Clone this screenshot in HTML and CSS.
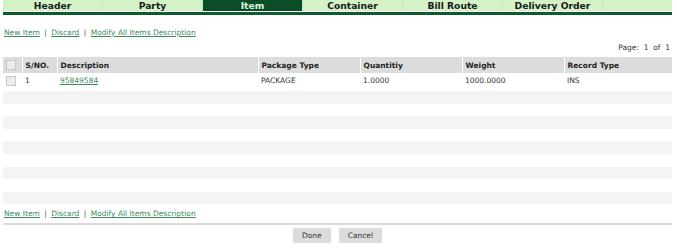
FILE: index.html
```html
<!DOCTYPE html>
<html lang="en">
<head>
  <meta charset="UTF-8" />
  <title>Item</title>
  <link rel="stylesheet" href="styles.css">
</head>
<body>
  <div class="tabs">
    <div class="tab">Header</div>
    <div class="tab">Party</div>
    <div class="tab active">Item</div>
    <div class="tab">Container</div>
    <div class="tab">Bill Route</div>
    <div class="tab">Delivery Order</div>
    <div class="tab last"></div>
  </div>

  <div class="actions top">
    <a href="#">New Item</a> <span class="sep">|</span>
    <a href="#">Discard</a> <span class="sep">|</span>
    <a href="#">Modify All Items Description</a>
  </div>

  <div class="pager">Page:&nbsp; 1&nbsp; of&nbsp; 1</div>

  <table class="grid">
    <colgroup>
      <col class="c-chk">
      <col class="c-sno">
      <col class="c-desc">
      <col class="c-pkg">
      <col class="c-qty">
      <col class="c-wt">
      <col>
    </colgroup>
    <thead>
      <tr>
        <th><span class="chk"></span></th>
        <th>S/NO.</th>
        <th>Description</th>
        <th>Package Type</th>
        <th>Quantitiy</th>
        <th>Weight</th>
        <th>Record Type</th>
      </tr>
    </thead>
    <tbody>
      <tr class="data">
        <td><span class="chk"></span></td>
        <td>1</td>
        <td><a href="#">95849584</a></td>
        <td>PACKAGE</td>
        <td>1.0000</td>
        <td>1000.0000</td>
        <td>INS</td>
      </tr>
      <tr class="empty odd"><td colspan="7"></td></tr>
      <tr class="empty"><td colspan="7"></td></tr>
      <tr class="empty odd"><td colspan="7"></td></tr>
      <tr class="empty"><td colspan="7"></td></tr>
      <tr class="empty odd"><td colspan="7"></td></tr>
      <tr class="empty"><td colspan="7"></td></tr>
      <tr class="empty odd"><td colspan="7"></td></tr>
      <tr class="empty"><td colspan="7"></td></tr>
      <tr class="empty odd"><td colspan="7"></td></tr>
    </tbody>
  </table>

  <div class="actions bottom">
    <a href="#">New Item</a> <span class="sep">|</span>
    <a href="#">Discard</a> <span class="sep">|</span>
    <a href="#">Modify All Items Description</a>
  </div>

  <div class="buttons">
    <button>Done</button>
    <button>Cancel</button>
  </div>
</body>
</html>
```

FILE: styles.css
```css
body {
  margin: 0;
  padding: 0 5px 0 3px;
  font-family: "DejaVu Sans", Verdana, sans-serif;
  font-size: 7.5px;
  color: #333;
  background: #fff;
}

.tabs {
  display: flex;
  height: 11px;
  border-bottom: 3px solid #0d5a2f;
  padding-bottom: 1px;
}
.tab {
  box-sizing: border-box;
  width: 100px;
  background: #d3f2c6;
  border-right: 1px solid #c6e8b8;
  text-align: center;
  font-weight: bold;
  font-size: 9.2px;
  line-height: 11px;
  color: #1a1a1a;
}
.tab.active {
  background: #0b4d29;
  color: #dff3d8;
}
.tab.last {
  flex: 1;
  border-right: 0;
}

.actions {
  padding-left: 1px;
  color: #555;
}
.actions.top {
  margin-top: 13px;
}
.actions a {
  color: #3b8a5c;
}
.sep {
  margin: 0 2px;
}

.pager {
  text-align: right;
  margin-top: 6px;
  padding-right: 2px;
}

.grid {
  width: 100%;
  table-layout: fixed;
  border-collapse: collapse;
  margin-top: 5px;
}
.c-chk { width: 19px; }
.c-sno { width: 35px; }
.c-desc { width: 201px; }
.c-pkg { width: 102px; }
.c-qty { width: 102px; }
.c-wt { width: 102px; }

.grid th {
  background: #dcdcdc;
  text-align: left;
  font-weight: bold;
  height: 16px;
  padding: 0 3px;
  border-left: 1px solid #fff;
  color: #222;
}
.grid th:first-child {
  border-left: 0;
}

.grid td {
  padding: 0 3px;
  vertical-align: top;
}
.data td {
  height: 18px;
  padding-top: 3px;
  box-sizing: border-box;
}
.data a {
  color: #3b8a5c;
}
.empty td {
  height: 12.6px;
  padding: 0;
}
.empty.odd td {
  background: #f4f4f4;
}

.chk {
  display: inline-block;
  width: 8px;
  height: 8px;
  border: 1px solid #c8c8c8;
  background: #ececec;
  vertical-align: middle;
}

.actions.bottom {
  margin-top: 5px;
  padding-bottom: 5px;
  border-bottom: 2px solid #dcdcdc;
}

.buttons {
  display: flex;
  justify-content: center;
  gap: 8px;
  padding-top: 3px;
}
.buttons button {
  font-family: inherit;
  font-size: 7.5px;
  color: #333;
  background: #dcdcdc;
  border: 0;
  height: 15px;
  padding: 0 9px;
}
```
